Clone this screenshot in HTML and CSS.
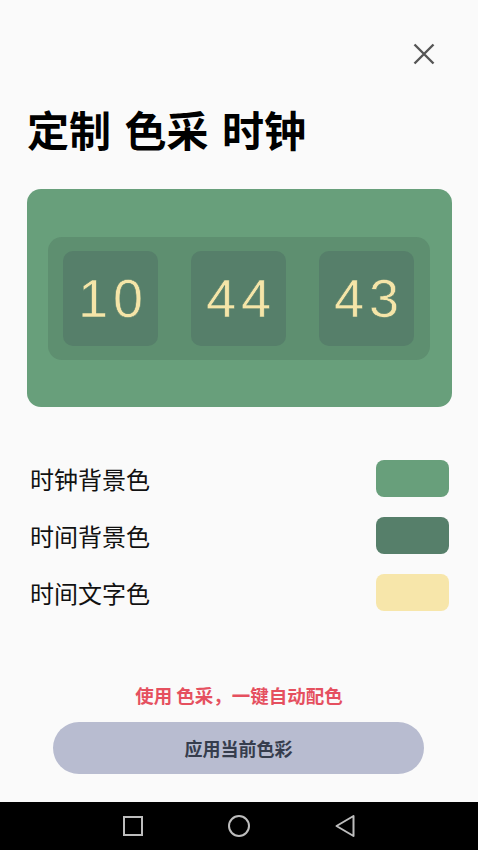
FILE: index.html
```
<!DOCTYPE html>
<html lang="zh">
<head>
<meta charset="utf-8">
<link rel="stylesheet" href="styles.css">
</head>
<body>
<div class="page">
  <div class="content">
    <div class="topbar">
      <svg class="close" width="22" height="22" viewBox="0 0 22 22">
        <path d="M1.5 1.5 L20.5 20.5 M20.5 1.5 L1.5 20.5" stroke="#555" stroke-width="2.4" stroke-linecap="butt" fill="none"/>
      </svg>
    </div>
    <h1 class="title">定制 色采 时钟</h1>
    <div class="card">
      <div class="panel">
        <div class="digit">10</div>
        <div class="digit">44</div>
        <div class="digit">43</div>
      </div>
    </div>
    <div class="rows">
      <div class="row"><span class="label">时钟背景色</span><span class="swatch sw-clock"></span></div>
      <div class="row"><span class="label">时间背景色</span><span class="swatch sw-time"></span></div>
      <div class="row"><span class="label">时间文字色</span><span class="swatch sw-text"></span></div>
    </div>
    <div class="hint">使用 色采，一键自动配色</div>
    <div class="btn">应用当前色彩</div>
  </div>
  <div class="nav">
    <svg width="24" height="24" viewBox="0 0 24 24"><rect x="3" y="3" width="18" height="18" fill="none" stroke="#bdbdbd" stroke-width="2"/></svg>
    <svg width="24" height="24" viewBox="0 0 24 24"><circle cx="12" cy="12" r="10" fill="none" stroke="#bdbdbd" stroke-width="2"/></svg>
    <svg width="24" height="24" viewBox="0 0 24 24"><path d="M3.5 12 L20.5 2 L20.5 22 Z" fill="none" stroke="#bdbdbd" stroke-width="2" stroke-linejoin="round"/></svg>
  </div>
</div>
</body>
</html>
```
FILE: styles.css
```
html, body {
  margin: 0;
  padding: 0;
}
body {
  background: #fafafa;
  font-family: "Noto Sans CJK SC", "Noto Sans", sans-serif;
}
.page {
  width: 478px;
  height: 850px;
  display: flex;
  flex-direction: column;
  overflow: hidden;
}
.content {
  flex: 1;
  display: flex;
  flex-direction: column;
}
.topbar {
  display: flex;
  justify-content: flex-end;
  padding: 43px 43px 0 0;
  height: 22px;
}
.close {
  display: block;
}
.title {
  margin: 39px 0 0 27px;
  font-size: 42px;
  line-height: 50px;
  font-weight: 700;
  word-spacing: 4px;
  color: #000;
}
.card {
  margin: 35px 26px 0 27px;
  height: 218px;
  background: #689f7b;
  border-radius: 14px;
  display: flex;
  align-items: center;
  padding-left: 21px;
}
.panel {
  display: flex;
  gap: 33px;
  padding: 14px 16px 14px 15px;
  background: #5e8f70;
  border-radius: 14px;
}
.digit {
  width: 95px;
  height: 95px;
  border-radius: 10px;
  background: #567f6a;
  color: #f5e5a8;
  font-family: "Liberation Sans", Arial, sans-serif;
  font-size: 54px;
  letter-spacing: 5px;
  text-indent: 5px;
  -webkit-text-stroke: 0.6px #567f6a;
  display: flex;
  align-items: center;
  justify-content: center;
}
.rows {
  margin-top: 53px;
  display: flex;
  flex-direction: column;
  gap: 20px;
  padding: 0 29px 0 30px;
}
.row {
  display: flex;
  align-items: center;
  justify-content: space-between;
  height: 37px;
}
.label {
  font-size: 24px;
  color: #111;
  line-height: 37px;
}
.swatch {
  width: 73px;
  height: 37px;
  border-radius: 8px;
}
.sw-clock { background: #689f7b; }
.sw-time { background: #567f6a; }
.sw-text { background: #f7e6aa; }
.hint {
  margin-top: 72px;
  text-align: center;
  font-size: 18.5px;
  line-height: 24px;
  font-weight: 700;
  color: #e5505f;
}
.btn {
  margin: 15px 54px 0 53px;
  height: 52px;
  border-radius: 26px;
  background: #b8bcd0;
  color: #363d4d;
  font-size: 18px;
  font-weight: 700;
  display: flex;
  align-items: center;
  justify-content: center;
}
.nav {
  height: 48px;
  background: #000;
  display: flex;
  align-items: center;
  justify-content: center;
  gap: 82px;
}
.nav svg {
  display: block;
}
```
